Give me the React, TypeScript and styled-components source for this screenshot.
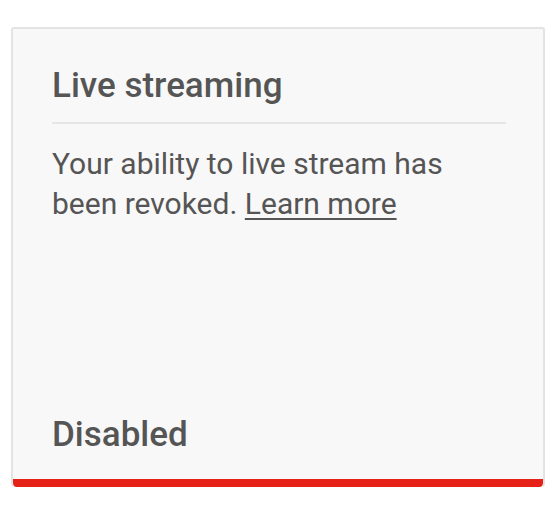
import React from "react";
import styled, { createGlobalStyle } from "styled-components";

const GlobalStyle = createGlobalStyle`
  html, body {
    margin: 0;
    padding: 0;
    background: #ffffff;
    font-family: Roboto, "Liberation Sans", Arial, sans-serif;
  }
`;

const Page = styled.div`
  padding: 27px 9px 0 11px;
`;

const Card = styled.div`
  box-sizing: border-box;
  width: 534px;
  height: 460px;
  display: flex;
  flex-direction: column;
  background: #f8f8f8;
  border: 2px solid #e3e3e3;
  border-bottom: none;
  border-radius: 3px 3px 4px 4px;
  overflow: hidden;
`;

const Body = styled.div`
  flex: 1;
  display: flex;
  flex-direction: column;
  padding: 0 37px 0 39px;
`;

const Title = styled.h2`
  margin: 0;
  padding: 37px 0 16px;
  font-size: 35px;
  font-weight: 500;
  line-height: 40px;
  color: #555555;
  border-bottom: 2px solid #e6e6e6;
`;

const Text = styled.p`
  margin: 0;
  padding-top: 20px;
  max-width: 430px;
  font-size: 30px;
  line-height: 40px;
  color: #555555;
`;

const Link = styled.a`
  color: #555555;
  text-decoration: underline;
  text-underline-offset: 4px;
  text-decoration-thickness: 2px;
`;

const Status = styled.div`
  margin-top: auto;
  padding-bottom: 24px;
  font-size: 35px;
  font-weight: 500;
  line-height: 40px;
  color: #555555;
`;

const StatusBar = styled.div<{ $color: string }>`
  height: 8px;
  background: ${(p) => p.$color};
  border-radius: 0 0 4px 4px;
`;

export default function App() {
  return (
    <>
      <GlobalStyle />
      <Page>
        <Card>
          <Body>
            <Title>Live streaming</Title>
            <Text>
              Your ability to live stream has been revoked.{" "}
              <Link href="#">Learn more</Link>
            </Text>
            <Status>Disabled</Status>
          </Body>
          <StatusBar $color="#e62117" />
        </Card>
      </Page>
    </>
  );
}
